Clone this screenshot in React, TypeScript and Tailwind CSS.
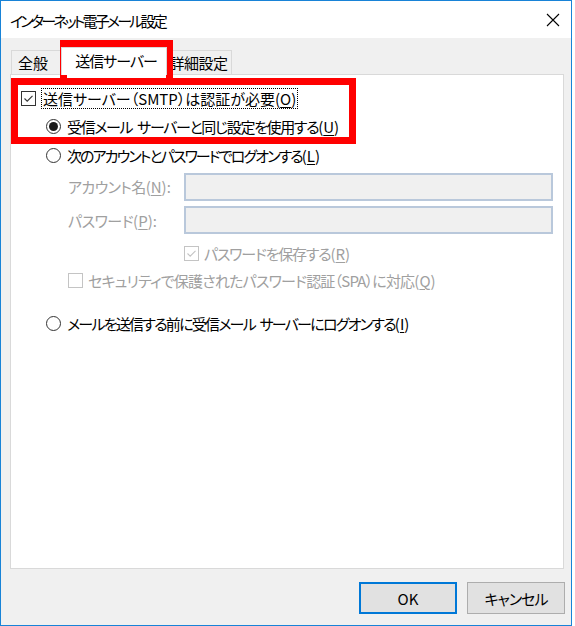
import React from "react";

const jp = "font-['Noto_Sans_CJK_JP','Noto_Sans_CJK_SC',sans-serif] [font-feature-settings:'palt']";

// access key suffix, e.g. (O) with the letter underlined
function Acc({ k, colon }: { k: string; colon?: boolean }) {
  return (
    <span className="tracking-normal">
      (<span className="underline underline-offset-2 decoration-1">{k}</span>){colon ? ":" : ""}
    </span>
  );
}

function Checkbox({ checked, disabled }: { checked?: boolean; disabled?: boolean }) {
  const stroke = disabled ? "#c4c4c4" : "#333333";
  return (
    <span
      className={`flex h-[15px] w-[15px] shrink-0 items-center justify-center border bg-white ${
        disabled ? "border-[#c4c4c4]" : "border-[#333333]"
      }`}
    >
      {checked && (
        <svg width="13" height="13" viewBox="0 0 13 13">
          <polyline points="2.5,6.5 5.2,9.2 10.5,3.8" fill="none" stroke={stroke} strokeWidth="1.1" />
        </svg>
      )}
    </span>
  );
}

function Radio({ selected }: { selected?: boolean }) {
  return (
    <span className="flex h-[15px] w-[15px] shrink-0 items-center justify-center rounded-full border border-[#333333] bg-white">
      {selected && <span className="h-[9px] w-[9px] rounded-full bg-[#1a1a1a]" />}
    </span>
  );
}

export default function App() {
  return (
    <div className={`relative h-[626px] w-[575px] bg-white text-[15px] leading-none text-black ${jp}`}>
      <div className="flex h-[626px] w-[572px] flex-col border border-[#1883d7] bg-[#f0f0f0]">
        {/* Title bar */}
        <div className="flex h-[37px] shrink-0 items-center justify-between bg-white pl-[9px] pr-[11px]">
          <span className="pt-[1px] tracking-[-2.8px]">インターネット電子メール設定</span>
          <svg width="14" height="14" viewBox="0 0 14 14">
            <path d="M1 1 L13 13 M13 1 L1 13" stroke="#000" strokeWidth="1.1" />
          </svg>
        </div>

        {/* Tabs */}
        <div className="ml-[10px] mt-[9px] flex h-[27px] items-end">
          <div className="flex h-[24px] w-[52px] items-center border border-b-0 border-[#d9d9d9] bg-[#f0f0f0] pl-[6px]">
            全般
          </div>
          <div className="relative z-10 -mx-[2px] -mb-px flex h-[28px] w-[106px] items-center justify-center border border-b-0 border-[#d9d9d9] bg-white pb-[2px] pl-[4px] tracking-[-1px]">
            送信サーバー
          </div>
          <div className="flex h-[24px] w-[67px] items-center justify-center border border-b-0 border-[#d9d9d9] bg-[#f0f0f0] tracking-[-0.5px]">
            詳細設定
          </div>
        </div>

        {/* Panel */}
        <div className="ml-[9px] flex h-[495px] w-[554px] flex-col border border-[#d9d9d9] bg-white pl-[10px] pt-[9px]">
          <div className="flex h-[28px] items-center">
            <Checkbox checked />
            <span className="ml-[5px] border border-dotted border-black px-[1px] py-[2px]">
              送信サーバー（SMTP）は認証が必要<Acc k="O" />
            </span>
          </div>
          <div className="flex h-[28px] items-center pl-[25px]">
            <Radio selected />
            <span className="ml-[6px] tracking-[-1.35px] [word-spacing:3px]">
              受信メール サーバーと同じ設定を使用する<Acc k="U" />
            </span>
          </div>
          <div className="flex h-[30px] items-center pl-[25px]">
            <Radio />
            <span className="ml-[6px] tracking-[-1.9px]">
              次のアカウントとパスワードでログオンする<Acc k="L" />
            </span>
          </div>
          <div className="flex h-[33px] items-center pl-[47px] text-[#a0a0a0]">
            <span className="w-[116px] tracking-[-0.6px]">
              アカウント名<Acc k="N" colon />
            </span>
            <span className="h-[28px] w-[369px] border-2 border-[#b9c8db] bg-[#f0f0f0]" />
          </div>
          <div className="flex h-[34px] items-center pl-[47px] text-[#a0a0a0]">
            <span className="w-[116px] tracking-[-0.5px]">
              パスワード<Acc k="P" colon />
            </span>
            <span className="h-[28px] w-[369px] border-2 border-[#b9c8db] bg-[#f0f0f0]" />
          </div>
          <div className="flex h-[32px] items-center pl-[163px] text-[#a0a0a0]">
            <Checkbox checked disabled />
            <span className="ml-[5px] tracking-[-1.2px]">
              パスワードを保存する<Acc k="R" />
            </span>
          </div>
          <div className="flex h-[22px] items-center pl-[47px] text-[#a0a0a0]">
            <Checkbox disabled />
            <span className="ml-[5px] tracking-[-0.8px]">
              セキュリティで保護されたパスワード認証（SPA）に対応<Acc k="Q" />
            </span>
          </div>
          <div className="mt-[21px] flex h-[22px] items-center pl-[25px]">
            <Radio />
            <span className="ml-[6px] tracking-[-1.75px] [word-spacing:3px]">
              メールを送信する前に受信メール サーバーにログオンする<Acc k="I" />
            </span>
          </div>
        </div>

        {/* Buttons */}
        <div className="mt-[13px] flex justify-end gap-[10px] pr-[6px]">
          <button className="flex h-[32px] w-[98px] items-center justify-center border-2 border-[#0078d7] bg-[#e1e1e1]">
            OK
          </button>
          <button className="flex h-[32px] w-[98px] items-center justify-center border border-[#adadad] bg-[#e1e1e1] tracking-[-1px]">
            キャンセル
          </button>
        </div>
      </div>

      {/* Red annotation boxes */}
      <div className="pointer-events-none absolute left-[60px] top-[40px] h-[45px] w-[113px] border-[7px] border-[#ff0000]" />
      <div className="pointer-events-none absolute left-[11px] top-[78px] h-[66px] w-[345px] border-[7px] border-[#ff0000]" />
    </div>
  );
}
